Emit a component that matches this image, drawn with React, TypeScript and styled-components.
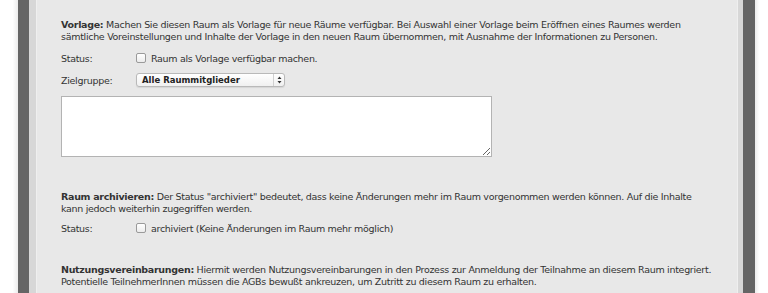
import React from 'react'
import styled, { createGlobalStyle } from 'styled-components'

const GlobalStyle = createGlobalStyle`
    html, body {
        margin: 0;
        padding: 0;
        background: #ffffff;
    }
`

const Frame = styled.div`
    width: 768px;
    height: 293px;
    overflow: hidden;
    display: flex;
    font-family: "DejaVu Sans", Verdana, sans-serif;
    font-size: 9.5px;
    letter-spacing: -0.3px;
    color: #333333;
`

const Gutter = styled.div<{ $w: number; $side: 'left' | 'right' }>`
    width: ${(p) => p.$w}px;
    flex: none;
    background: ${(p) =>
        p.$side === 'left'
            ? 'linear-gradient(to right, #ffffff 70%, #ececec)'
            : 'linear-gradient(to left, #ffffff 70%, #ececec)'};
`

const DarkBar = styled.div<{ $w: number }>`
    width: ${(p) => p.$w}px;
    flex: none;
    background: #656565;
`

const LightStrip = styled.div<{ $w: number; $side: 'left' | 'right' }>`
    width: ${(p) => p.$w}px;
    flex: none;
    box-sizing: border-box;
    background: #d7d7d7;
    ${(p) => (p.$side === 'left' ? 'border-right' : 'border-left')}: 1px solid #efefef;
`

const Content = styled.div`
    flex: 1;
    background: #e8e8e8;
    padding: 19px 24px 0 24px;
    box-sizing: border-box;
`

const Para = styled.p<{ $top?: number }>`
    margin: ${(p) => p.$top ?? 0}px 0 0 0;
    line-height: 12px;
    width: 652px;

    & > b {
        font-weight: bold;
    }
`

const Row = styled.div<{ $top: number }>`
    display: flex;
    align-items: center;
    height: 14px;
    margin-top: ${(p) => p.$top}px;
`

const Label = styled.span`
    width: 75px;
    flex: none;
`

const CheckLabel = styled.label`
    display: flex;
    align-items: center;
    gap: 5px;
`

const Box = styled.span`
    width: 8px;
    height: 8px;
    border: 1px solid #9a9a9a;
    border-radius: 2px;
    background: linear-gradient(#ffffff, #ececec);
    box-sizing: content-box;
`

const Select = styled.div`
    width: 147px;
    height: 12px;
    border: 1px solid #b9b9b9;
    border-radius: 3px;
    background: linear-gradient(#ffffff, #f0f0f0);
    display: flex;
    align-items: center;
    font-size: 8.5px;
    font-weight: bold;
    letter-spacing: 0;
    color: #222222;
    box-shadow: 0 1px 1px rgba(0, 0, 0, 0.08);

    & > span {
        flex: 1;
        padding-left: 5px;
    }
`

const Arrows = styled.div`
    width: 10px;
    height: 100%;
    border-left: 1px solid #d0d0d0;
    display: flex;
    align-items: center;
    justify-content: center;
`

const Area = styled.textarea`
    display: block;
    margin-top: 9px;
    width: 431px;
    height: 61px;
    box-sizing: border-box;
    border: 1px solid #b3b3b3;
    background: #ffffff;
    resize: both;
    outline: none;
    padding: 2px;
`

function Checkbox({ text }: { text: string }) {
    return (
        <CheckLabel>
            <Box />
            <span>{text}</span>
        </CheckLabel>
    )
}

export default function App() {
    return (
        <>
            <GlobalStyle />
            <Frame>
                <Gutter $w={18} $side="left" />
                <DarkBar $w={11} />
                <LightStrip $w={8} $side="left" />
                <Content>
                    <Para>
                        <b>Vorlage:</b> Machen Sie diesen Raum als Vorlage für neue Räume verfügbar. Bei Auswahl einer Vorlage beim Eröffnen eines Raumes werden sämtliche Voreinstellungen und Inhalte der Vorlage in den neuen Raum übernommen, mit Ausnahme der Informationen zu Personen.
                    </Para>
                    <Row $top={8}>
                        <Label>Status:</Label>
                        <Checkbox text="Raum als Vorlage verfügbar machen." />
                    </Row>
                    <Row $top={8}>
                        <Label>Zielgruppe:</Label>
                        <Select>
                            <span>Alle Raummitglieder</span>
                            <Arrows>
                                <svg width="5" height="8" viewBox="0 0 5 8">
                                    <path d="M2.5 0.5 L4.5 3 L0.5 3 Z M2.5 7.5 L4.5 5 L0.5 5 Z" fill="#333" />
                                </svg>
                            </Arrows>
                        </Select>
                    </Row>
                    <Area />
                    <Para $top={34}>
                        <b>Raum archivieren:</b> Der Status "archiviert" bedeutet, dass keine Änderungen mehr im Raum vorgenommen werden können. Auf die Inhalte kann jedoch weiterhin zugegriffen werden.
                    </Para>
                    <Row $top={6}>
                        <Label>Status:</Label>
                        <Checkbox text="archiviert (Keine Änderungen im Raum mehr möglich)" />
                    </Row>
                    <Para $top={29}>
                        <b>Nutzungsvereinbarungen:</b> Hiermit werden Nutzungsvereinbarungen in den Prozess zur Anmeldung der Teilnahme an diesem Raum integriert. Potentielle TeilnehmerInnen müssen die AGBs bewußt ankreuzen, um Zutritt zu diesem Raum zu erhalten.
                    </Para>
                </Content>
                <LightStrip $w={6} $side="right" />
                <DarkBar $w={12} />
                <Gutter $w={14} $side="right" />
            </Frame>
        </>
    )
}
